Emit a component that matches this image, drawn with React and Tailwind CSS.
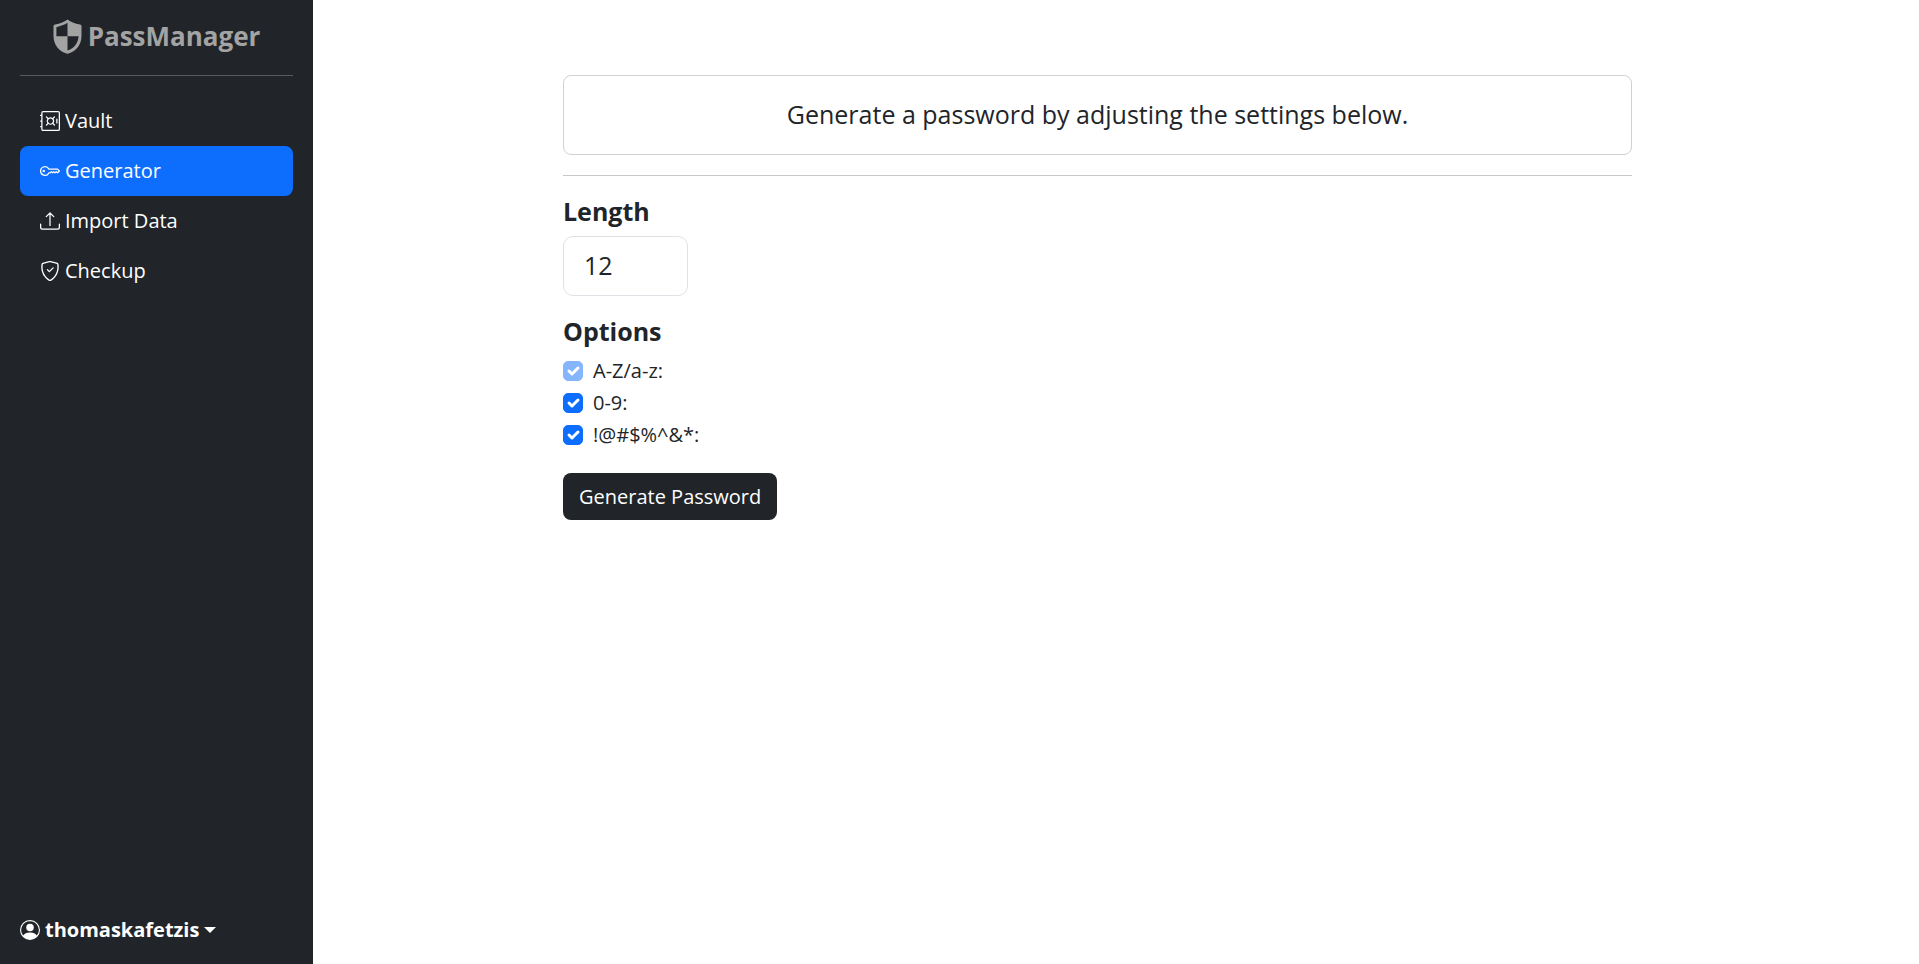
import { useState } from "react";
import { BsSafe, BsKey, BsUpload, BsShieldCheck, BsPersonCircle } from "react-icons/bs";

const links = [
  { label: "Vault", icon: BsSafe },
  { label: "Generator", icon: BsKey, active: true },
  { label: "Import Data", icon: BsUpload },
  { label: "Checkup", icon: BsShieldCheck },
];

function Logo() {
  return (
    <svg viewBox="0 0 29 35" className="h-[35px] w-[29px]" fill="currentColor" aria-hidden="true">
      <path
        fillRule="evenodd"
        d="M14.5 .5C17 2.600 22 4.600 27 5.500Q28.500 5.800 28.500 7.300V17C28.500 26 22.500 32.600 15.500 34.500Q14.500 34.800 13.500 34.500C6.500 32.600 .5 26 .5 17V7.300Q.5 5.800 2 5.500C7 4.600 12 2.600 14.500 .5ZM14.500 3.800C11.500 5.800 7.500 7.300 3.400 8.200V17.300H14.500ZM14.500 17.300V31.600C20.500 29.800 25.200 24.500 25.600 17.300Z"
      />
    </svg>
  );
}

function Sidebar() {
  return (
    <aside className="flex w-[313px] shrink-0 flex-col bg-[#212529] px-5 pt-[18px] pb-5 text-white">
      <a href="#" className="flex items-center justify-center gap-[6px] text-[#a3a3a3]">
        <Logo />
        <span className="text-[26px]/[36px] font-bold">PassManager</span>
      </a>
      <hr className="mt-[21px] mb-5 border-[#585b5e]" />
      <nav>
        <ul>
          {links.map(({ label, icon: Icon, active }) => (
            <li key={label}>
              <a
                href="#"
                aria-current={active ? "page" : undefined}
                className={`flex items-center gap-[5px] rounded-lg px-5 py-[10px] text-xl/[30px] ${active ? "bg-[#0d6efd]" : ""}`}
              >
                <Icon className="size-5" />
                {label}
              </a>
            </li>
          ))}
        </ul>
      </nav>
      <button type="button" className="mt-auto flex items-center gap-[5px] self-start text-xl/[28px] font-bold">
        <BsPersonCircle className="size-5" />
        thomaskafetzis
        <span className="border-x-6 border-t-6 border-x-transparent border-t-white" />
      </button>
    </aside>
  );
}

function Option({ id, label, disabled }) {
  const [checked, setChecked] = useState(true);
  return (
    <div className="flex items-center gap-[10px]">
      <span className="relative flex size-5">
        <input
          id={id}
          type="checkbox"
          checked={checked}
          disabled={disabled}
          onChange={(e) => setChecked(e.target.checked)}
          className="peer size-5 appearance-none rounded-[5px] border border-[#dee2e6] checked:border-[#0d6efd] checked:bg-[#0d6efd] disabled:opacity-50"
        />
        <svg viewBox="0 0 20 20" className="pointer-events-none absolute inset-0 hidden size-5 peer-checked:block" aria-hidden="true">
          <path d="m6 10 3 3 6-6" fill="none" stroke="white" strokeWidth="3" strokeLinecap="round" strokeLinejoin="round" />
        </svg>
      </span>
      <label htmlFor={id}>{label}</label>
    </div>
  );
}

export default function App() {
  return (
    <div className="flex min-h-screen bg-white font-['Open_Sans','Noto_Sans',sans-serif] text-[#212529]">
      <Sidebar />
      <main className="min-w-0 flex-1 pt-[75px] pr-[287px] pl-[250px]">
        <div className="rounded-lg border border-[#d0d1d2] px-5 pt-[19px] pb-[21px] text-center text-[25px]/[38px]">
          Generate a password by adjusting the settings below.
        </div>
        <hr className="my-5 border-[#c7c8c9]" />
        <form onSubmit={(e) => e.preventDefault()}>
          <label htmlFor="length" className="mb-[10px] block text-[25px]/[30px] font-bold">Length</label>
          <input
            id="length"
            type="text"
            inputMode="numeric"
            defaultValue="12"
            className="block h-[60px] w-[125px] rounded-[10px] border border-[#dee2e6] px-5 pb-[2px] text-[25px]"
          />
          <fieldset>
            <legend className="pt-5 text-[25px]/[30px] font-bold">Options</legend>
            <div className="mt-[10px] flex flex-col gap-[2px] text-xl/[30px]">
              <Option id="letters" label="A-Z/a-z:" disabled />
              <Option id="digits" label="0-9:" />
              <Option id="symbols" label="!@#$%^&*:" />
            </div>
          </fieldset>
          <button type="submit" className="mt-[23px] rounded-lg bg-[#212529] px-4 py-2 text-xl/[31px] text-white">
            Generate Password
          </button>
        </form>
      </main>
    </div>
  );
}
